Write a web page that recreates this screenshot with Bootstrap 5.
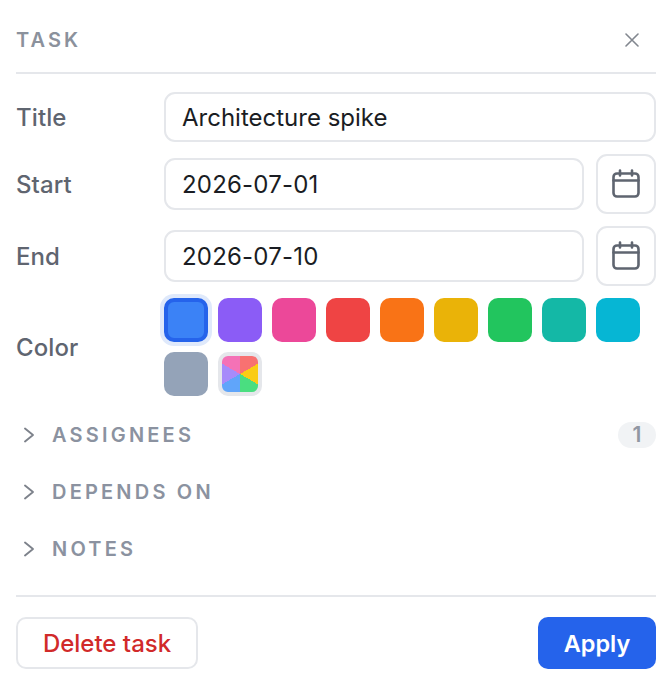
<!doctype html>
<html lang="en">
<head>
<meta charset="utf-8">
<title>Task</title>
<link href="https://cdn.jsdelivr.net/npm/bootstrap@5.3.0/dist/css/bootstrap.min.css" rel="stylesheet">
<style>
html,body{height:100%;background:#fff;}
body{font-family:Inter,"Liberation Sans",sans-serif;overflow:hidden;}
.panel-wrap{width:640px;margin-left:16px;}
.task-head{height:74px;border-bottom:2px solid #e5e7eb;}
.task-title{font-size:20px;font-weight:600;letter-spacing:3.1px;color:#8b919c;line-height:1;}
.close-x{color:#82878f;padding:0;border:0;background:none;width:14px;height:14px;margin-right:17px;display:flex;}
.form-grid{padding-top:18px;}
.field-row{display:flex;align-items:center;}
.row-title{height:50px;margin-bottom:12px;}
.row-start{height:60px;margin-bottom:12px;}
.row-end{height:60px;margin-bottom:12px;}
.field-label{width:148px;flex:none;font-size:24px;font-weight:500;letter-spacing:.1px;color:#5f6570;line-height:1;padding-top:2px;margin:0;}
.field-input.form-control{height:50px;border:2px solid #e5e7eb;border-radius:11px;font-size:24px;color:#1a1d23;padding:0 16px;background:#fff;font-family:inherit;}
.row-start .field-input.form-control,.row-end .field-input.form-control{height:52px;width:420px;flex:none;letter-spacing:.2px;}
.cal-btn.btn{width:60px;height:60px;margin-left:12px;border:2px solid #e5e7eb;border-radius:11px;padding:0;display:flex;align-items:center;justify-content:center;background:#fff;flex:none;}
.row-color{align-items:center;}
.swatches{display:flex;flex-wrap:wrap;gap:10px;width:492px;}
.swatch{width:44px;height:44px;border-radius:10px;flex:none;}
.swatch-on{border:4px solid #2563eb;box-shadow:0 0 0 4px #dfe9fb;background:#3b82f6;}
.swatch-multi{border:4px solid #e5e7eb;background:conic-gradient(#f87171 0 60deg,#facc15 60deg 120deg,#4ade80 120deg 180deg,#60a5fa 180deg 240deg,#a78bfa 240deg 300deg,#f472b6 300deg 360deg);background-origin:border-box;}
.sec-list{padding-top:10px;}
.sec-row{height:57px;display:flex;align-items:center;}
.sec-chev{width:36px;flex:none;padding-left:7px;display:flex;color:#7d828b;}
.sec-name{font-size:20px;font-weight:600;letter-spacing:3.2px;color:#8b92a0;line-height:1;}
.sec-count{margin-left:auto;width:38px;height:26px;border-radius:13px;background:#f1f3f5;color:#9197a3;font-size:21px;font-weight:600;display:flex;align-items:center;justify-content:center;}
.foot-bar{margin-top:18px;border-top:2px solid #e5e7eb;padding-top:20px;}
.del-btn.btn{width:182px;height:52px;border:2px solid #e5e7eb;border-radius:10px;color:#d12a2a;font-size:24px;font-weight:500;background:#fff;padding:2px 0 0;}
.apply-btn.btn{width:118px;height:52px;border:0;border-radius:10px;background:#2563eb;color:#fff;font-size:23.5px;font-weight:600;padding:2px 0 0;}
</style>
</head>
<body>
<div class="panel-wrap">
  <div class="task-head d-flex align-items-center justify-content-between pt-2">
    <span class="task-title">TASK</span>
    <button class="close-x" type="button" aria-label="Close"><svg width="14" height="14" viewBox="0 0 14 14" fill="none" stroke="currentColor" stroke-width="1.6" stroke-linecap="round"><path d="M1 1l12 12M13 1L1 13"/></svg></button>
  </div>
  <div class="form-grid">
    <div class="field-row row-title">
      <label class="field-label">Title</label>
      <input class="form-control field-input" value="Architecture spike">
    </div>
    <div class="field-row row-start">
      <label class="field-label">Start</label>
      <input class="form-control field-input" value="2026-07-01">
      <button class="btn cal-btn" type="button" aria-label="Pick start"><svg width="30" height="30" viewBox="0 0 30 30" fill="none" stroke="#5f6570" stroke-width="2.6" stroke-linecap="round" stroke-linejoin="round"><rect x="2.5" y="4.5" width="25" height="23" rx="3.5"/><path d="M2.5 11.5h25M9 1.5v5M21 1.5v5"/></svg></button>
    </div>
    <div class="field-row row-end">
      <label class="field-label">End</label>
      <input class="form-control field-input" value="2026-07-10">
      <button class="btn cal-btn" type="button" aria-label="Pick end"><svg width="30" height="30" viewBox="0 0 30 30" fill="none" stroke="#5f6570" stroke-width="2.6" stroke-linecap="round" stroke-linejoin="round"><rect x="2.5" y="4.5" width="25" height="23" rx="3.5"/><path d="M2.5 11.5h25M9 1.5v5M21 1.5v5"/></svg></button>
    </div>
    <div class="field-row row-color">
      <label class="field-label">Color</label>
      <div class="swatches">
        <span class="swatch swatch-on"></span>
        <span class="swatch" style="background:#8b5cf6"></span>
        <span class="swatch" style="background:#ec4899"></span>
        <span class="swatch" style="background:#ef4444"></span>
        <span class="swatch" style="background:#f97316"></span>
        <span class="swatch" style="background:#eab308"></span>
        <span class="swatch" style="background:#22c55e"></span>
        <span class="swatch" style="background:#14b8a6"></span>
        <span class="swatch" style="background:#06b6d4"></span>
        <span class="swatch" style="background:#94a3b8"></span>
        <span class="swatch swatch-multi"></span>
      </div>
    </div>
  </div>
  <div class="sec-list">
    <div class="sec-row">
      <span class="sec-chev"><svg width="14" height="18" viewBox="0 0 14 18" fill="none" stroke="currentColor" stroke-width="1.9" stroke-linecap="round" stroke-linejoin="round"><path d="M2 2.5L10 9L2 15.5"/></svg></span>
      <span class="sec-name">ASSIGNEES</span>
      <span class="sec-count">1</span>
    </div>
    <div class="sec-row">
      <span class="sec-chev"><svg width="14" height="18" viewBox="0 0 14 18" fill="none" stroke="currentColor" stroke-width="1.9" stroke-linecap="round" stroke-linejoin="round"><path d="M2 2.5L10 9L2 15.5"/></svg></span>
      <span class="sec-name">DEPENDS ON</span>
    </div>
    <div class="sec-row">
      <span class="sec-chev"><svg width="14" height="18" viewBox="0 0 14 18" fill="none" stroke="currentColor" stroke-width="1.9" stroke-linecap="round" stroke-linejoin="round"><path d="M2 2.5L10 9L2 15.5"/></svg></span>
      <span class="sec-name">NOTES</span>
    </div>
  </div>
  <div class="foot-bar d-flex justify-content-between">
    <button class="btn del-btn" type="button">Delete task</button>
    <button class="btn apply-btn" type="button">Apply</button>
  </div>
</div>
<script src="https://cdn.jsdelivr.net/npm/bootstrap@5.3.0/dist/js/bootstrap.bundle.min.js"></script>
</body>
</html>
